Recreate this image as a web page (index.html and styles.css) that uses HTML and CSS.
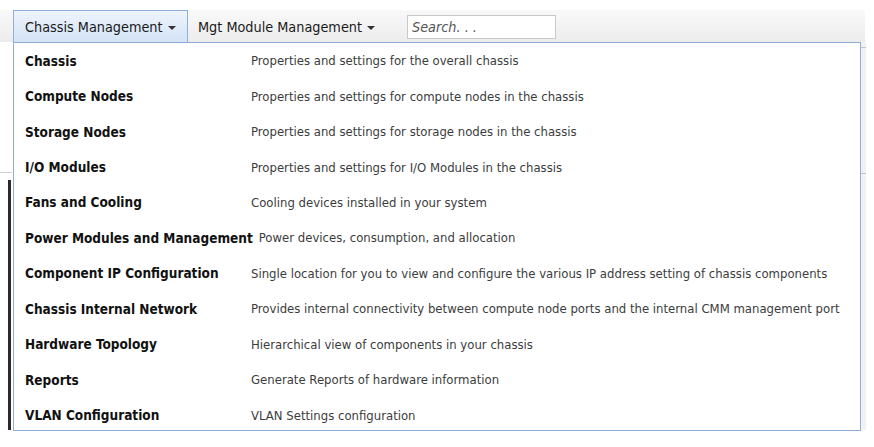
FILE: index.html
```html
<!DOCTYPE html>
<html>
<head>
<meta charset="utf-8">
<link rel="stylesheet" href="styles.css">
</head>
<body>
<div class="page">
  <div class="navbar">
    <div class="tab active">Chassis Management <span class="caret"></span></div>
    <div class="tab">Mgt Module Management <span class="caret"></span></div>
    <div class="search">Search. . .</div>
  </div>
  <div class="below">
    <div class="gutter-left"><div class="gl-line"></div><div class="gl-bar"></div></div>
    <div class="panel">
      <div class="row"><span class="label">Chassis</span><span class="desc">Properties and settings for the overall chassis</span></div>
      <div class="row"><span class="label">Compute Nodes</span><span class="desc">Properties and settings for compute nodes in the chassis</span></div>
      <div class="row"><span class="label">Storage Nodes</span><span class="desc">Properties and settings for storage nodes in the chassis</span></div>
      <div class="row"><span class="label">I/O Modules</span><span class="desc">Properties and settings for I/O Modules in the chassis</span></div>
      <div class="row"><span class="label">Fans and Cooling</span><span class="desc">Cooling devices installed in your system</span></div>
      <div class="row"><span class="label">Power Modules and Management</span><span class="desc">Power devices, consumption, and allocation</span></div>
      <div class="row"><span class="label">Component IP Configuration</span><span class="desc">Single location for you to view and configure the various IP address setting of chassis components</span></div>
      <div class="row"><span class="label">Chassis Internal Network</span><span class="desc">Provides internal connectivity between compute node ports and the internal CMM management port</span></div>
      <div class="row"><span class="label">Hardware Topology</span><span class="desc">Hierarchical view of components in your chassis</span></div>
      <div class="row"><span class="label">Reports</span><span class="desc">Generate Reports of hardware information</span></div>
      <div class="row"><span class="label">VLAN Configuration</span><span class="desc">VLAN Settings configuration</span></div>
    </div>
    <div class="gutter-right"><div class="gr-line1"></div><div class="gr-line2"></div></div>
  </div>
</div>
</body>
</html>
```

FILE: styles.css
```css
html, body {
  margin: 0;
  padding: 0;
  background: #ffffff;
}
body {
  font-family: "DejaVu Sans Condensed", "DejaVu Sans", sans-serif;
  font-stretch: condensed;
}
.page {
  padding-top: 10px;
  width: 874px;
}
.navbar {
  width: 865px;
  height: 32px;
  background: linear-gradient(#f9f9f9, #ececec);
  display: flex;
  align-items: stretch;
  padding-left: 13px;
  box-sizing: border-box;
}
.tab {
  display: flex;
  align-items: center;
  padding: 0 10px 0 9px;
  font-size: 14.3px;
  color: #1a1a1a;
  box-sizing: border-box;
  border: 1px solid transparent;
  border-bottom: none;
  white-space: nowrap;
}
.tab.active {
  width: 175px;
  padding-left: 11px;
  background: linear-gradient(#eef4fc, #d3e3f6);
  border-color: #8cb0d8;
}
.caret {
  display: inline-block;
  width: 0;
  height: 0;
  border-left: 4px solid transparent;
  border-right: 4px solid transparent;
  border-top: 4px solid #333;
  margin-left: 5px;
  margin-top: 2px;
}
.search {
  margin: 5px 0 3px 21px;
  width: 149px;
  box-sizing: border-box;
  border: 1px solid #c9c9c9;
  background: #fff;
  font-style: italic;
  color: #555;
  font-size: 14.3px;
  padding-left: 4px;
  display: flex;
  align-items: center;
}
.below {
  display: flex;
  align-items: flex-start;
}
.gutter-left {
  width: 13px;
  flex: none;
  display: flex;
  flex-direction: column;
}
.gl-line {
  margin-top: 130px;
  width: 12px;
  height: 1px;
  background: #cfcfcf;
}
.gl-bar {
  margin-top: 7px;
  margin-left: 8px;
  width: 3px;
  height: 250px;
  background: #2a2a2a;
}
.panel {
  width: 848px;
  flex: none;
  box-sizing: border-box;
  border: 1px solid #8faed3;
  background: #fff;
  padding: 0 0 0 11px;
  height: 389px;
}
.row {
  height: 35.45px;
  display: flex;
  align-items: center;
  font-size: 13px;
  white-space: nowrap;
}
.label {
  flex: none;
  min-width: 220px;
  margin-right: 6px;
  font-weight: bold;
  color: #111;
  font-size: 13.5px;
}
.desc {
  color: #3c3c3c;
}
.gutter-right {
  width: 5px;
  height: 388px;
  background: #f1f1f1;
  display: flex;
  flex-direction: column;
}
.gr-line1 {
  margin-top: 5px;
  height: 1px;
  background: #c4c4c4;
}
.gr-line2 {
  margin-top: 125px;
  height: 1px;
  background: #c4c4c4;
}
```
